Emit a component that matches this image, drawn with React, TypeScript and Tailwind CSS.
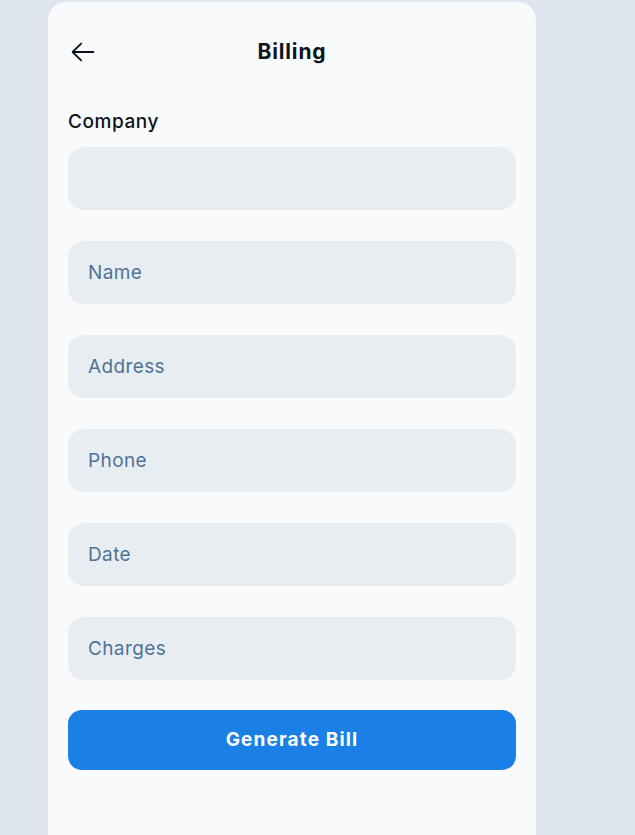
import React from "react";

const fields = ["Name", "Address", "Phone", "Date", "Charges"];

const ArrowLeft: React.FC = () => (
  <svg width="30" height="30" viewBox="0 0 256 256" fill="#0e141b">
    <path d="M224,128a8,8,0,0,1-8,8H59.31l58.35,58.34a8,8,0,0,1-11.32,11.32l-72-72a8,8,0,0,1,0-11.32l72-72a8,8,0,0,1,11.32,11.32L59.31,120H216A8,8,0,0,1,224,128Z" />
  </svg>
);

const App: React.FC = () => {
  return (
    <div
      className="h-[835px] w-full overflow-hidden bg-[#dee5ee] pt-[2px] pl-[48px]"
      style={{ fontFamily: "Inter, 'Noto Sans', sans-serif" }}
    >
      <div className="h-full w-[488px] rounded-t-[18px] bg-[#f8fafc] px-[20px] pt-[35px]">
        <div className="flex h-[30px] items-center">
          <button className="flex h-[30px] w-[30px] items-center justify-center">
            <ArrowLeft />
          </button>
          <h1 className="flex-1 text-center text-[21px] font-bold tracking-[0.04em] text-[#0e141b]">
            Billing
          </h1>
          <div className="w-[30px]" />
        </div>

        <label className="mt-[41px] block text-[19px] leading-[28px] font-medium tracking-[0.03em] text-[#0e141b]">
          Company
        </label>

        <div className="mt-[11px] flex flex-col gap-[31px]">
          <input
            className="h-[63px] w-full rounded-[16px] bg-[#e8edf2] px-[20px] text-[19px] text-[#0e141b] outline-none"
          />
          {fields.map((f) => (
            <input
              key={f}
              placeholder={f}
              className="h-[63px] w-full rounded-[16px] bg-[#e8edf2] px-[20px] text-[19px] tracking-[0.02em] text-[#0e141b] outline-none placeholder:text-[#4e7397]"
            />
          ))}
          <button className="-mt-[1px] h-[60px] w-full rounded-[14px] bg-[#1a80e5] text-[19px] font-bold tracking-[0.06em] text-white">
            Generate Bill
          </button>
        </div>
      </div>
    </div>
  );
};

export default App;
